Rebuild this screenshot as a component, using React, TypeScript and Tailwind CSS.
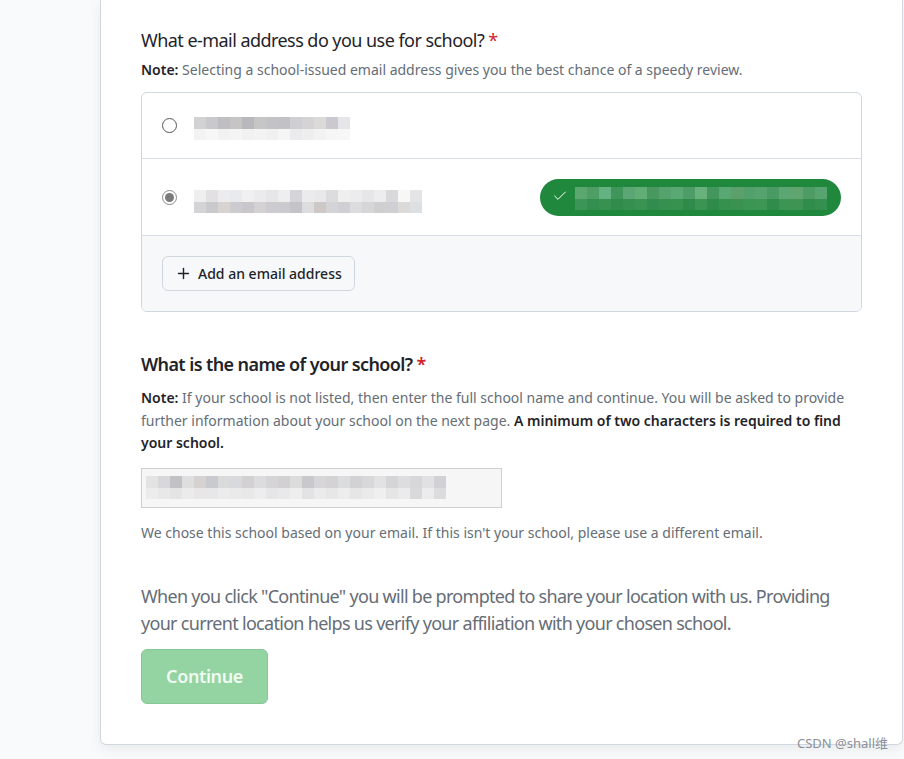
import React from "react"
import { Plus, Check } from "lucide-react"

// blurred (pixelated) email placeholders, like the screenshot
const greyTop = ["bg-[#d2d2d4]", "bg-[#c9c8ca]", "bg-[#bfbfc3]", "bg-[#c6c4c4]", "bg-[#b9b8bd]", "bg-[#c7c6c6]", "bg-[#c3c2c6]", "bg-[#c1c1c6]", "bg-[#cfcfd2]", "bg-[#d4d4d7]", "bg-[#dcdad9]", "bg-[#c9c9cf]", "bg-[#e6e6e8]"]
const greyBottom = ["bg-[#f3f3f3]", "bg-[#f7f7f7]", "bg-[#f2f2f2]", "bg-[#f4f4f4]", "bg-[#f1f1f1]", "bg-[#f3f3f3]", "bg-[#f0f0f1]", "bg-[#f5f5f5]", "bg-[#ebebed]", "bg-[#eeeeef]", "bg-[#f2f2f3]", "bg-[#f6f6f6]", "bg-[#f7f7f7]"]
const grey2Top = ["bg-[#efeff0]", "bg-[#e2e0e2]", "bg-[#ececee]", "bg-[#e9eaed]", "bg-[#f1f0f0]", "bg-[#ebeaec]", "bg-[#e6e5e8]", "bg-[#eeeeef]", "bg-[#d5d5d9]", "bg-[#ebebed]", "bg-[#e8e8ea]", "bg-[#dcdcdf]", "bg-[#efefef]", "bg-[#ececec]", "bg-[#e6e6e8]", "bg-[#ededed]", "bg-[#d9d9dc]", "bg-[#f7f7f6]", "bg-[#e4e4e6]"]
const grey2Bottom = ["bg-[#d4d3d5]", "bg-[#c9c9ce]", "bg-[#d6d3d1]", "bg-[#cbcbd0]", "bg-[#c9c7cb]", "bg-[#d3d1d1]", "bg-[#cdcbd0]", "bg-[#cacacf]", "bg-[#c4c3c8]", "bg-[#dddde0]", "bg-[#cdc8c6]", "bg-[#d3d3d8]", "bg-[#cfcfd4]", "bg-[#dcdcdf]", "bg-[#d6d6d9]", "bg-[#d0cfcf]", "bg-[#cfcfd4]", "bg-[#dcdad9]", "bg-[#dde0e3]"]
const greenTop = ["bg-[#5ca670]", "bg-[#4f9e66]", "bg-[#64b282]", "bg-[#3f955a]", "bg-[#5aa675]", "bg-[#60ad76]", "bg-[#48985f]", "bg-[#55a26f]", "bg-[#5aa873]", "bg-[#4e9c68]", "bg-[#68b07c]", "bg-[#43965c]", "bg-[#59a874]", "bg-[#5c9f6a]", "bg-[#52a16c]", "bg-[#56a36f]", "bg-[#4a9b63]", "bg-[#5ba673]", "bg-[#60a470]", "bg-[#4e9b66]", "bg-[#58a470]"]
const greenBottom = ["bg-[#3a9556]", "bg-[#338f50]", "bg-[#37914f]", "bg-[#2f8c4b]", "bg-[#35904f]", "bg-[#3a9353]", "bg-[#318d4d]", "bg-[#36914f]", "bg-[#38924f]", "bg-[#2e8b4a]", "bg-[#3b9452]", "bg-[#2f8b4a]", "bg-[#36904e]", "bg-[#3a9150]", "bg-[#3b9553]", "bg-[#3e9655]", "bg-[#2f8c4a]", "bg-[#3c9553]", "bg-[#3d9453]", "bg-[#2f8c4b]", "bg-[#339051]"]
const inputTop = ["bg-[#e3e3e4]", "bg-[#d8d8da]", "bg-[#c2c2c6]", "bg-[#dededf]", "bg-[#d6d2d1]", "bg-[#c9cacf]", "bg-[#dadada]", "bg-[#d8d9dc]", "bg-[#d2d0d0]", "bg-[#dcdcdf]", "bg-[#d5d5d8]", "bg-[#d3d0d1]", "bg-[#dcdcdd]", "bg-[#c8c8cd]", "bg-[#d6d6d8]", "bg-[#d4d2d3]", "bg-[#dbdcdd]", "bg-[#d2d2d5]", "bg-[#d8d8da]", "bg-[#e2e2e3]", "bg-[#d5d5d7]", "bg-[#dddddf]", "bg-[#d7d7da]", "bg-[#e1e1e3]", "bg-[#d2d2d6]"]
const inputBottom = ["bg-[#ececed]", "bg-[#e8e8e9]", "bg-[#e4e4e5]", "bg-[#ebebec]", "bg-[#e8e6e6]", "bg-[#e7e7e9]", "bg-[#ececec]", "bg-[#eaeaeb]", "bg-[#e9e8e8]", "bg-[#ededee]", "bg-[#e6e6e8]", "bg-[#eae9e9]", "bg-[#eeeeef]", "bg-[#e3e3e5]", "bg-[#ebebec]", "bg-[#e8e7e8]", "bg-[#ededee]", "bg-[#e6e6e7]", "bg-[#eaeaeb]", "bg-[#efeff0]", "bg-[#e5e5e6]", "bg-[#ebebec]", "bg-[#d9d9dc]", "bg-[#ececed]", "bg-[#dcdcdf]"]

function Mosaic({ top, bottom }: { top: string[]; bottom: string[] }) {
  return (
    <div className="flex flex-col">
      <div className="flex">
        {top.map((c, i) => (
          <div key={i} className={`h-[12px] w-[12px] ${c}`} />
        ))}
      </div>
      <div className="flex">
        {bottom.map((c, i) => (
          <div key={i} className={`h-[11px] w-[12px] ${c}`} />
        ))}
      </div>
    </div>
  )
}

export default function App() {
  return (
    <div className="relative min-h-[759px] bg-[#f9fafb] font-['Segoe_UI','Noto_Sans',sans-serif] text-[#1f2328]">
      <div className="ml-[100px] w-[803px] rounded-b-md border border-t-0 border-[#d0d7de] bg-white px-[40px] pt-[27px] pb-[40px] shadow-[0_4px_12px_rgba(140,149,159,0.15)]">
        {/* email question */}
        <h2 className="text-[18px] leading-[27px] font-normal tracking-[-0.55px]">
          What e-mail address do you use for school? <span className="text-[#d1242f]">*</span>
        </h2>
        <p className="mt-[5px] text-[14px] leading-[21px] text-[#656d76]">
          <span className="font-semibold text-[#1f2328]">Note:</span> Selecting a school-issued email address gives you the best chance of a speedy review.
        </p>

        <div className="mt-[12px] w-[721px] overflow-hidden rounded-md border border-[#d0d7de]">
          <div className="flex h-[66px] items-center border-b border-[#d8dee4] pl-[20px]">
            <div className="h-[15px] w-[15px] rounded-full border-[1.5px] border-[#555]" />
            <div className="ml-[17px] mt-[6px]">
              <Mosaic top={greyTop} bottom={greyBottom} />
            </div>
          </div>
          <div className="flex h-[77px] items-start justify-between border-b border-[#d8dee4] pl-[20px] pr-[20px]">
            <div className="flex items-center pt-[22px]">
              <div className="flex h-[15px] w-[15px] items-center justify-center rounded-full border-[1.5px] border-[#8a8a8a]">
                <div className="h-[9px] w-[9px] rounded-full bg-[#7a7a7a]" />
              </div>
              <div className="ml-[17px] mt-[9px]">
                <Mosaic top={grey2Top} bottom={grey2Bottom} />
              </div>
            </div>
            <div className="mt-[20px] flex h-[37px] w-[301px] items-center rounded-full bg-[#1f883d] pl-[12px]">
              <Check className="mb-[3px] h-[16px] w-[16px] text-white" strokeWidth={1.5} />
              <div className="ml-[7px] mt-[2px]">
                <Mosaic top={greenTop} bottom={greenBottom} />
              </div>
            </div>
          </div>
          <div className="bg-[#f6f8fa] px-[20px] pt-[20px] pb-[20px]">
            <button className="flex h-[35px] w-[193px] items-center gap-[6px] rounded-md border border-[#d0d7de] bg-[#f6f8fa] pl-[12px] text-[14px] font-medium text-[#1f2328]">
              <Plus className="h-[17px] w-[17px]" strokeWidth={2} />
              Add an email address
            </button>
          </div>
        </div>

        {/* school question */}
        <h2 className="mt-[39px] text-[18px] leading-[27px] font-semibold tracking-[-0.6px]">
          What is the name of your school? <span className="text-[#d1242f]">*</span>
        </h2>
        <p className="mt-[9px] w-[720px] text-[14px] leading-[22.5px] text-[#656d76]">
          <span className="font-semibold text-[#1f2328]">Note:</span> If your school is not listed, then enter the full school name and continue. You will be asked to provide further information about your school on the next page.{" "}
          <span className="font-semibold text-[#1f2328]">A minimum of two characters is required to find your school.</span>
        </p>
        <div className="mt-[13px] flex h-[40px] w-[361px] items-center border border-[#cfcfcf] bg-[#f6f6f6] pl-[4px]">
          <Mosaic top={inputTop} bottom={inputBottom} />
        </div>
        <p className="mt-[14px] text-[14px] leading-[21px] text-[#656d76]">
          We chose this school based on your email. If this isn't your school, please use a different email.
        </p>

        <p className="mt-[40px] w-[720px] text-[18px] leading-[27.5px] tracking-[-0.7px] text-[#656d76]">
          When you click "Continue" you will be prompted to share your location with us. Providing your current location helps us verify your affiliation with your chosen school.
        </p>
        <button className="mt-[11px] h-[55px] w-[127px] rounded-md border border-[#86c796] bg-[#94d3a2] text-[18px] font-semibold tracking-[-0.4px] text-[#f0fbf2]">
          Continue
        </button>
      </div>

      <div className="absolute right-[16px] top-[734px] text-[13px] text-[#8a8f99] font-['Noto_Sans','Noto_Sans_CJK_SC',sans-serif]">
        CSDN @shall维
      </div>
    </div>
  )
}
